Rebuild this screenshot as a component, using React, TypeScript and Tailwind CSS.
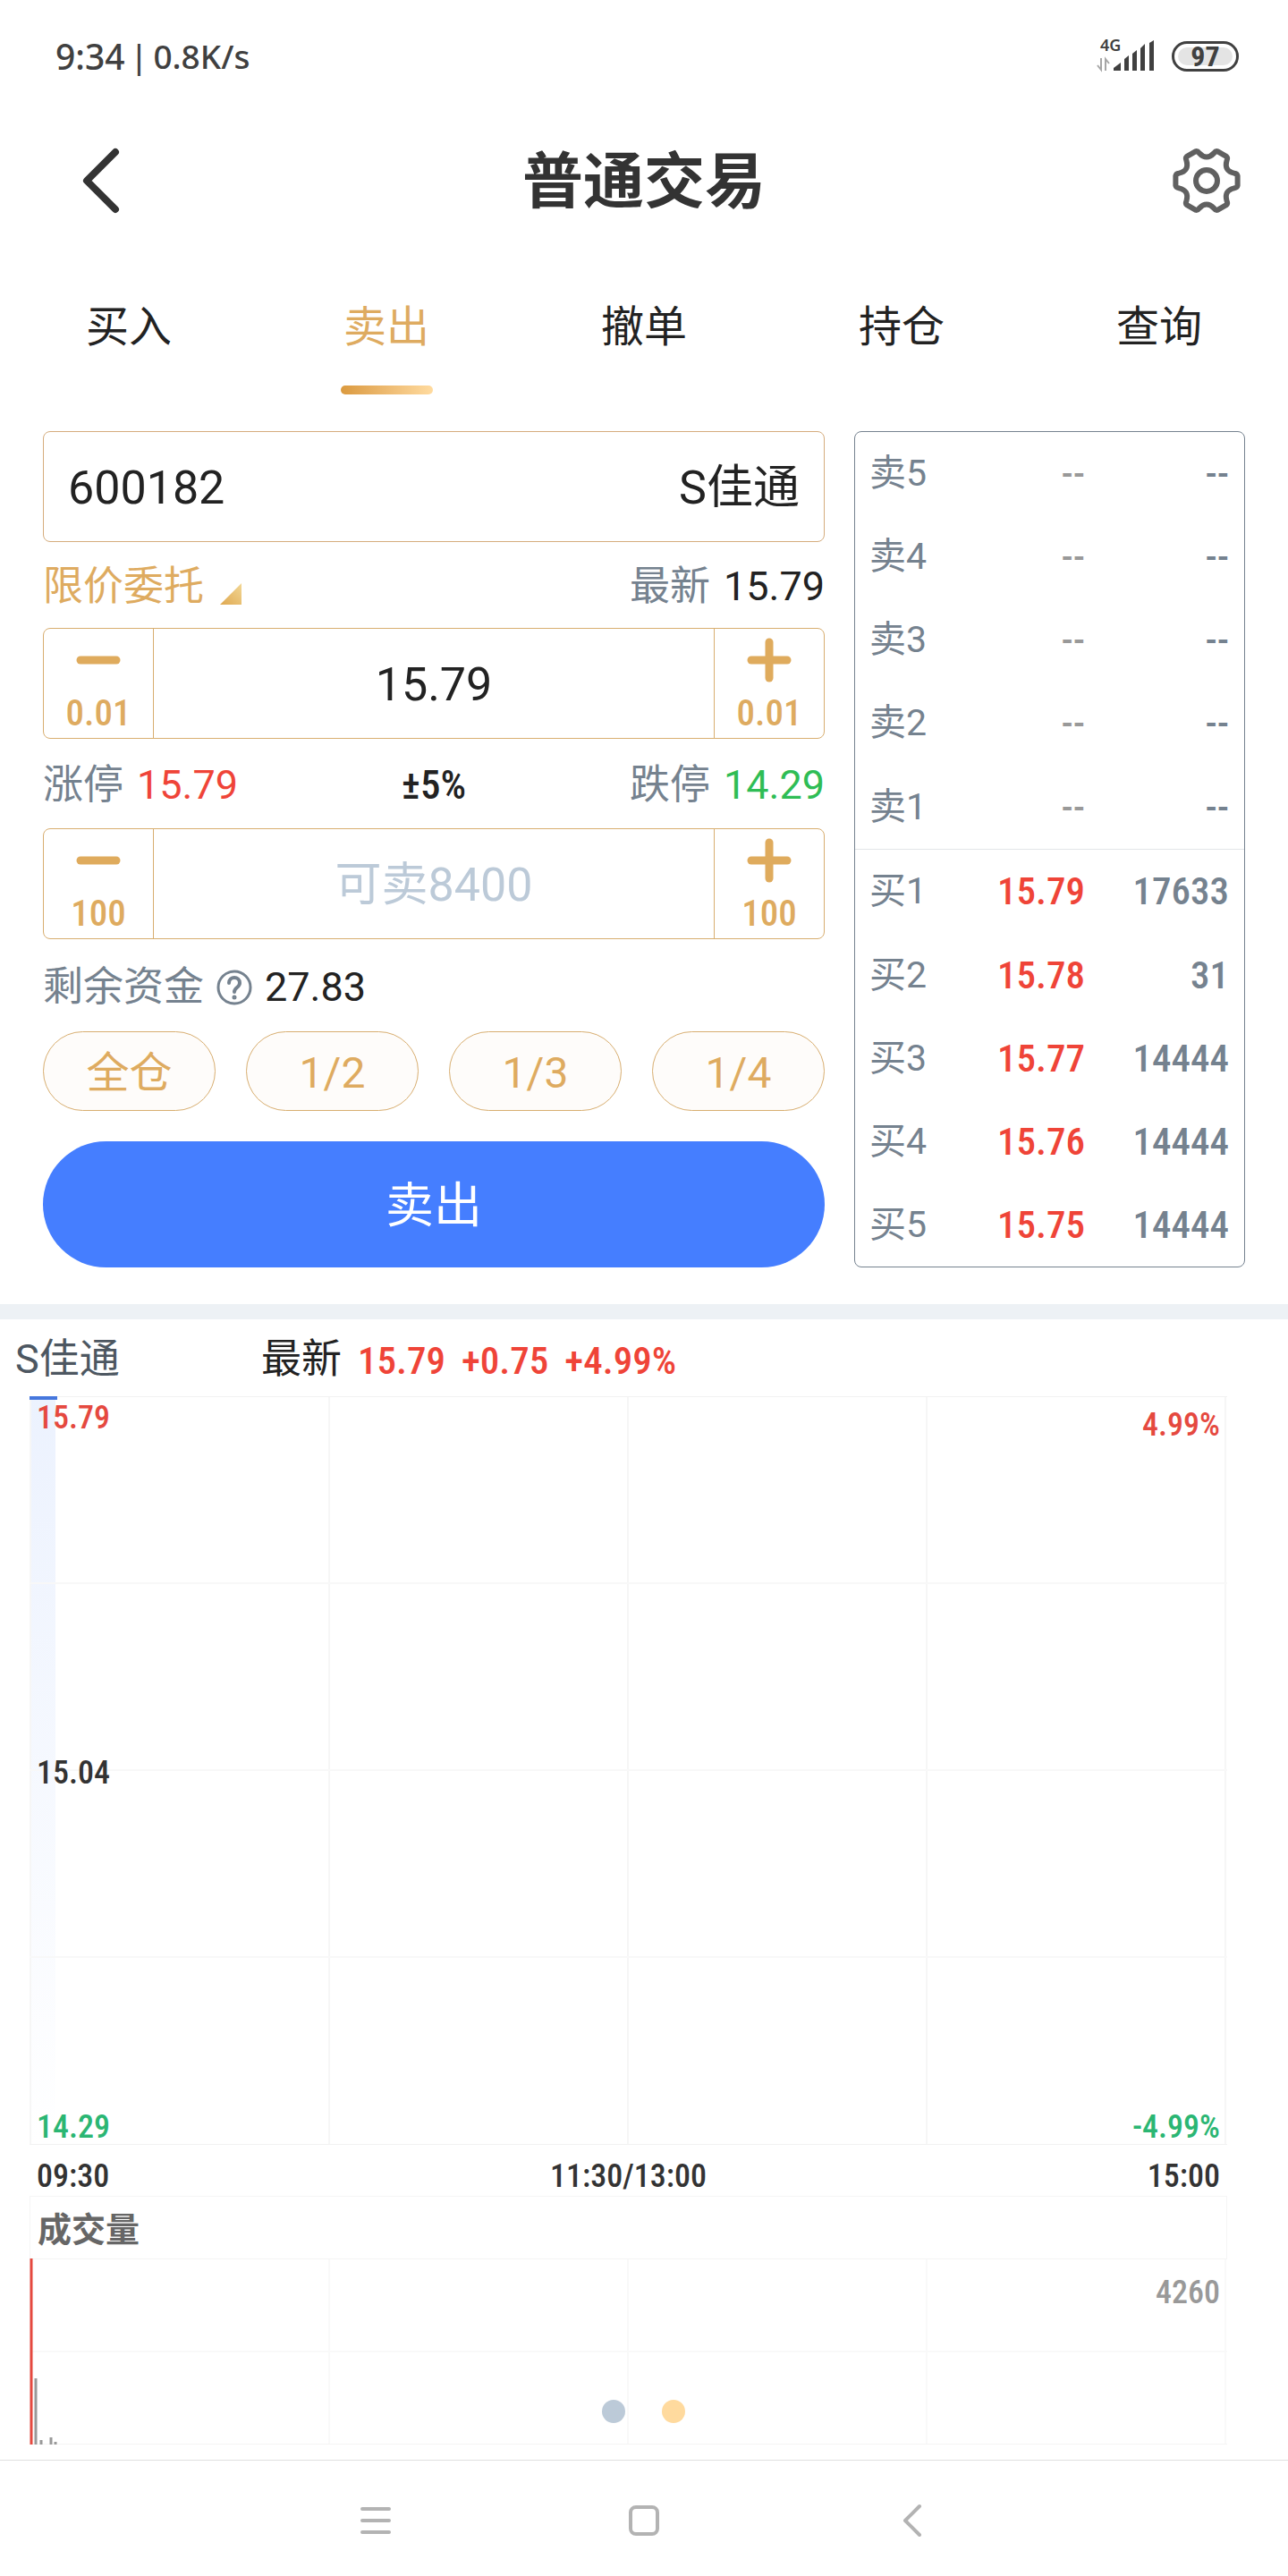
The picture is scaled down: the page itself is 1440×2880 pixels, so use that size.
import { useState } from 'react'

const tabs = ['买入', '卖出', '撤单', '持仓', '查询']
const portions = ['全仓', '1/2', '1/3', '1/4']

const asks = ['卖5', '卖4', '卖3', '卖2', '卖1']
const bids = [
  { label: '买1', price: '15.79', qty: '17633' },
  { label: '买2', price: '15.78', qty: '31' },
  { label: '买3', price: '15.77', qty: '14444' },
  { label: '买4', price: '15.76', qty: '14444' },
  { label: '买5', price: '15.75', qty: '14444' },
]

const volumes = [
  { x: 2, height: 208, color: '#e5493f' },
  { x: 7, height: 74, color: '#999999' },
  { x: 13, height: 5, color: '#999999' },
  { x: 24, height: 8, color: '#999999' },
  { x: 29, height: 3, color: '#999999' },
]

// Narrow face for quotes and steps
const num = "font-['Roboto_Condensed','Liberation_Sans_Narrow',Roboto,sans-serif] font-medium"

// Six-lobed gear outline around (0, 0)
const polar = (deg: number, r: number) => {
  const a = (deg * Math.PI) / 180
  return `${(r * Math.cos(a)).toFixed(1)} ${(r * Math.sin(a)).toFixed(1)}`
}
const gearPath =
  [0, 60, 120, 180, 240, 300]
    .map((t, i) =>
      [
        `${i === 0 ? 'M' : 'L'}${polar(t - 9, 35)}`,
        `L${polar(t + 9, 35)}`,
        `Q${polar(t + 13, 35)} ${polar(t + 15, 32)}`,
        `Q${polar(t + 30, 22)} ${polar(t + 45, 32)}`,
        `Q${polar(t + 47, 35)} ${polar(t + 51, 35)}`,
      ].join(' ')
    )
    .join(' ') + 'Z'

function StatusBar() {
  return (
    <div className="flex h-[126px] items-center justify-between pr-[55px] pl-[62px] font-['Noto_Sans',sans-serif] font-medium text-[#404040]">
      <div className="flex items-center gap-1.5">
        <span className="text-[39px]">9:34</span>
        <span className="text-[36px]">|</span>
        <span className="text-[37px]">0.8K/s</span>
      </div>
      <div className="flex items-center gap-[18px]">
        <svg width="66" height="54" viewBox="0 -8 66 54" role="img" aria-label="4G">
          <text x="4" y="13" fontSize="18" fontWeight="600" fill="#404040">4G</text>
          <g fill="none" stroke="#a6a6a6" strokeWidth="2">
            <path d="M5 21v13L1 29" />
            <path d="M10 35V22l4 5" />
          </g>
          <g fill="#404040">
            <path d="M19 32l8-6v9h-8z" />
            <path d="M31 22l5-4v17h-5z" />
            <path d="M40 16l5-4v23h-5z" />
            <path d="M49 10l5-5v30h-5z" />
            <path d="M59 4l5-3v34h-5z" />
          </g>
        </svg>
        <div className="h-[34px] w-[75px] rounded-full border-[3px] border-[#404040] p-1">
          <div className="flex h-full items-center justify-center rounded-full bg-[#e4e4e4]">
            <span className="font-['Roboto_Condensed',Roboto,sans-serif] text-[32px] leading-none font-bold">97</span>
          </div>
        </div>
      </div>
    </div>
  )
}

function Header() {
  return (
    <header className="flex h-[152px] items-center justify-between px-[51px]">
      <button type="button" aria-label="返回" className="w-20 pl-9">
        <svg width="50" height="80" viewBox="0 0 50 80" fill="none" stroke="#333" strokeWidth="8" strokeLinecap="round" strokeLinejoin="round">
          <path d="M42 8L10 40l32 32" />
        </svg>
      </button>
      <h1 className="pt-1 text-[68px] leading-none font-bold text-[#333]">普通交易</h1>
      <button type="button" aria-label="设置">
        <svg width="80" height="80" viewBox="-40 -40 80 80" fill="none" stroke="#606060" strokeWidth="6" strokeLinejoin="round">
          <path d={gearPath} />
          <circle r="12" />
        </svg>
      </button>
    </header>
  )
}

function Tabs() {
  const [active, setActive] = useState('卖出')
  return (
    <nav className="grid grid-cols-5 pt-[52px]">
      {tabs.map((tab) => (
        <button key={tab} type="button" onClick={() => setActive(tab)} className="flex flex-col items-center gap-[29px]">
          <span className={tab === active ? 'text-[48px] leading-[72px] text-[#deab60]' : 'text-[48px] leading-[72px] text-[#222]'}>{tab}</span>
          <span className={tab === active ? 'h-2.5 w-[103px] rounded-full bg-gradient-to-r from-[#db9a3e] to-[#ffdb9f]' : 'h-2.5'} />
        </button>
      ))}
    </nav>
  )
}

function StepButton({ sign, step }: { sign: 'minus' | 'plus'; step: string }) {
  return (
    <button
      type="button"
      aria-label={sign === 'minus' ? `减少${step}` : `增加${step}`}
      className={
        sign === 'minus'
          ? 'flex w-[123px] flex-col items-center border-r border-[#d8ae70] pt-[10px]'
          : 'flex w-[123px] flex-col items-center border-l border-[#d8ae70] pt-[10px]'
      }
    >
      <svg width="50" height="50" viewBox="0 0 50 50" stroke="#dfab5d" strokeWidth="9" strokeLinecap="round">
        <path d="M5 25h40" />
        {sign === 'plus' && <path d="M25 5v40" />}
      </svg>
      <span className={`${num} pt-2.5 text-[41px] leading-[48px] text-[#deab60]`}>{step}</span>
    </button>
  )
}

function OrderForm() {
  return (
    <form className="flex min-w-0 flex-col" onSubmit={(e) => e.preventDefault()}>
      <div className="flex h-[124px] items-center justify-between rounded-lg border border-[#d5ac7d] px-[27px] pt-1 text-[52px] text-[#222]">
        <input aria-label="股票代码" defaultValue="600182" className="w-[300px] min-w-0 outline-none" />
        <span>S佳通</span>
      </div>

      <div className="flex h-24 items-center justify-between pt-1 text-[45px]">
        <div className="flex items-center gap-[17px] text-[#deab60]">
          <select aria-label="委托方式" className="appearance-none bg-transparent outline-none">
            <option>限价委托</option>
          </select>
          <svg width="24" height="24" viewBox="0 0 24 24" className="mt-4">
            <defs>
              <linearGradient id="corner" x1="0" y1="1" x2="1" y2="0">
                <stop offset="0" stopColor="#dfa850" />
                <stop offset="1" stopColor="#f2d795" />
              </linearGradient>
            </defs>
            <path d="M24 0v24H0z" fill="url(#corner)" />
          </svg>
        </div>
        <div className="flex items-center gap-[15px]">
          <span className="text-[#75828f]">最新</span>
          <span className="text-[#222]">15.79</span>
        </div>
      </div>

      <div className="flex h-[124px] overflow-hidden rounded-lg border border-[#d8ae70]">
        <StepButton sign="minus" step="0.01" />
        <input aria-label="委托价格" defaultValue="15.79" className="min-w-0 flex-1 pt-1 text-center text-[52px] text-[#222] outline-none" />
        <StepButton sign="plus" step="0.01" />
      </div>

      <div className="flex h-[100px] items-center justify-between pt-1 text-[45px]">
        <div className="flex items-center gap-[15px]">
          <span className="text-[#75828f]">涨停</span>
          <span className="text-[#ef4438]">15.79</span>
        </div>
        <span className={`${num} text-[#222]`}>±5%</span>
        <div className="flex items-center gap-[15px]">
          <span className="text-[#75828f]">跌停</span>
          <span className="text-[#2fbd55]">14.29</span>
        </div>
      </div>

      <div className="flex h-[124px] overflow-hidden rounded-lg border border-[#d8ae70]">
        <StepButton sign="minus" step="100" />
        <input aria-label="委托数量" placeholder="可卖8400" className="min-w-0 flex-1 pt-1 text-center text-[52px] outline-none placeholder:text-[#bccad8]" />
        <StepButton sign="plus" step="100" />
      </div>

      <div className="flex h-[103px] items-center gap-[14px] pt-1 text-[45px]">
        <span className="text-[#75828f]">剩余资金</span>
        <button type="button" aria-label="资金说明">
          <svg width="40" height="40" viewBox="0 0 40 40" fill="none" stroke="#75828f" strokeWidth="3" strokeLinecap="round">
            <circle cx="20" cy="20" r="18" />
            <path d="M14 15c0-8 12-8 12 0 0 5-6 5-6 10" strokeWidth="4" />
            <circle cx="20" cy="31" r="1" fill="#75828f" />
          </svg>
        </button>
        <span className="text-[#222]">27.83</span>
      </div>

      <div className="grid grid-cols-4 gap-[34px]">
        {portions.map((p) => (
          <button key={p} type="button" className="h-[89px] rounded-full border border-[#d8ae70] bg-[#fefcfa] pt-1 text-[48px] leading-none text-[#deab60]">
            {p}
          </button>
        ))}
      </div>

      <button type="submit" className="mt-[34px] h-[141px] rounded-full bg-[#457eff] pt-1 text-[54px] text-white">
        卖出
      </button>
    </form>
  )
}

function OrderBook() {
  return (
    <div className="rounded-lg border border-[#75828f] text-[41px] text-[#75828f]">
      <table className="h-full w-full leading-none" aria-label="五档行情">
        <tbody>
          {asks.map((label) => (
            <tr key={label}>
              <th scope="row" className="pl-4 text-left font-normal">{label}</th>
              <td className={`${num} text-right text-[43px] text-[#999]`}>--</td>
              <td className={`${num} w-[178px] pr-[17px] text-right text-[43px]`}>--</td>
            </tr>
          ))}
        </tbody>
        <tbody className="border-t border-[#e2e5e8]">
          {bids.map((row) => (
            <tr key={row.label}>
              <th scope="row" className="pl-4 text-left font-normal">{row.label}</th>
              <td className={`${num} text-right text-[43px] text-[#ef4438]`}>{row.price}</td>
              <td className={`${num} w-[178px] pr-[17px] text-right text-[43px]`}>{row.qty}</td>
            </tr>
          ))}
        </tbody>
      </table>
    </div>
  )
}

function PriceChart() {
  return (
    <section>
      <div className="flex h-[86px] items-center pt-1 pl-[17px] text-[45px]">
        <h2 className="w-[275px] text-[#4d5761]">S佳通</h2>
        <span className="text-[#222]">最新</span>
        <div className={`${num} flex gap-[18px] pt-0.5 pl-[18px] text-[43px] text-[#ef4438]`}>
          <span>15.79</span>
          <span>+0.75</span>
          <span>+4.99%</span>
        </div>
      </div>

      <div className="mr-[68px] ml-[33px]">
        {/* Price */}
        <div className="relative h-[837px]">
          <svg className="block h-full w-full" viewBox="0 0 1339 837" preserveAspectRatio="none">
            <defs>
              <linearGradient id="area" x1="0" y1="0" x2="0" y2="1">
                <stop offset="0" stopColor="#ecf2fe" />
                <stop offset="1" stopColor="#ffffff" />
              </linearGradient>
            </defs>
            <rect x="1" y="1" width="28" height="835" fill="url(#area)" />
            <path d="M1 0v837M335 0v837M669 0v837M1003 0v837M1337 0v837" stroke="#f6f6f6" strokeWidth="2" />
            <path d="M0 209h1339M0 418h1339M0 627h1339" stroke="#f8f8f8" strokeWidth="2" />
            <path d="M0 .5h1339M0 836.5h1339" stroke="#f2f2f2" />
            <rect width="31" height="4" fill="#4677dd" />
          </svg>
          <div className={`${num} absolute inset-0 flex justify-between px-2 pt-1.5 pb-0.5 text-[36px] leading-[36px]`}>
            <div className="flex flex-col justify-between">
              <span className="text-[#e5493f]">15.79</span>
              <span className="text-[#333]">15.04</span>
              <span className="text-[#2bb673]">14.29</span>
            </div>
            <div className="flex flex-col justify-between pt-2 text-right">
              <span className="text-[#e5493f]">4.99%</span>
              <span className="text-[#2bb673]">-4.99%</span>
            </div>
          </div>
        </div>

        <div className={`${num} grid h-[57px] grid-cols-3 items-center px-2 pt-3 text-[36px] leading-[36px] text-[#333]`}>
          <span>09:30</span>
          <span className="text-center">11:30/13:00</span>
          <span className="text-right">15:00</span>
        </div>

        {/* Volume */}
        <div className="flex h-[70px] items-center border border-b-0 border-[#f5f5f5] pt-1.5 pl-2 text-[38px] font-bold text-[#666]">成交量</div>
        <div className="relative h-[208px]">
          <svg className="block h-full w-full" viewBox="0 0 1339 208" preserveAspectRatio="none">
            <path d="M1 0v208M335 0v208M669 0v208M1003 0v208M1337 0v208" stroke="#f9f9f9" strokeWidth="2" />
            <path d="M0 104h1339" stroke="#f9f9f9" strokeWidth="2" />
            <path d="M0 .5h1339M0 207.5h1339" stroke="#f4f4f4" />
            {volumes.map((v) => (
              <path key={v.x} d={`M${v.x} 208v-${v.height}`} stroke={v.color} strokeWidth="3" />
            ))}
          </svg>
          <span className={`${num} absolute top-5 right-2 text-[36px] leading-[36px] text-[#999]`}>4260</span>
          <div className="absolute inset-x-0 bottom-6 flex justify-center gap-[41px] pl-[34px]">
            <button type="button" aria-label="分时" className="size-[26px] rounded-full bg-[#bccad8]" />
            <button type="button" aria-label="持仓列表" className="size-[26px] rounded-full bg-[#ffda9e]" />
          </div>
        </div>
      </div>
    </section>
  )
}

function SystemNav() {
  return (
    <nav className="mt-[17px] flex h-[130px] items-center justify-center gap-[260px] border-t border-[#e0e0e0] pt-1">
      <button type="button" aria-label="最近任务">
        <svg width="40" height="40" viewBox="0 0 40 40" stroke="#b3b3b3" strokeWidth="4" strokeLinecap="round">
          <path d="M5 7h30M5 20h30M5 33h30" />
        </svg>
      </button>
      <button type="button" aria-label="主屏幕">
        <svg width="40" height="40" viewBox="0 0 40 40" fill="none" stroke="#b3b3b3" strokeWidth="4">
          <rect x="5" y="5" width="30" height="30" rx="6" />
        </svg>
      </button>
      <button type="button" aria-label="返回上一页">
        <svg width="40" height="40" viewBox="0 0 40 40" fill="none" stroke="#b3b3b3" strokeWidth="4" strokeLinecap="round" strokeLinejoin="round">
          <path d="M28 4L12 20l16 16" />
        </svg>
      </button>
    </nav>
  )
}

export default function App() {
  return (
    <div className="min-h-screen bg-white font-[Roboto,'Noto_Sans_CJK_SC',sans-serif]">
      <StatusBar />
      <Header />
      <Tabs />
      <main>
        <div className="grid grid-cols-[2fr_1fr] gap-[33px] border-b-[17px] border-[#edf1f5] px-12 pt-[41px] pb-[41px]">
          <OrderForm />
          <OrderBook />
        </div>
        <PriceChart />
      </main>
      <SystemNav />
    </div>
  )
}
